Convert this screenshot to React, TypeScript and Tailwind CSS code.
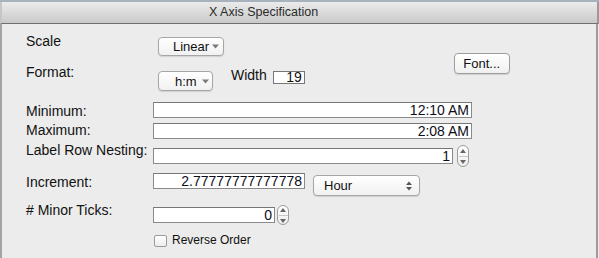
const font = { fontFamily: '"Liberation Sans", Arial, sans-serif' };

function DownTri() {
  return (
    <svg width="7" height="5" viewBox="0 0 7 5" className="shrink-0">
      <path d="M0 0.5 L7 0.5 L3.5 4.5 Z" fill="#7a7a7a" />
    </svg>
  );
}

function UpDown() {
  return (
    <svg width="6" height="10" viewBox="0 0 6 10" className="shrink-0">
      <path d="M0 4 L6 4 L3 0.5 Z" fill="#555" />
      <path d="M0 6 L6 6 L3 9.5 Z" fill="#555" />
    </svg>
  );
}

function Popup({ label, w, h, pl, gap }: { label: string; w: string; h: string; pl: string; gap: string }) {
  return (
    <div
      className={`${w} ${h} ${pl} ${gap} flex items-center rounded-[4px] border border-[#a6a6a6] bg-gradient-to-b from-white to-[#f1f1f1] shadow-[0_1px_1px_rgba(0,0,0,0.12)] text-[13px] leading-none text-[#111]`}
    >
      <span>{label}</span>
      <DownTri />
    </div>
  );
}

function Stepper({ h }: { h: string }) {
  return (
    <div className={`${h} w-[12px] flex flex-col items-center justify-center gap-[3px] rounded-[6px] border border-[#9c9c9c] bg-gradient-to-b from-white to-[#eeeeee]`}>
      <svg width="6" height="4" viewBox="0 0 6 4">
        <path d="M0 4 L6 4 L3 0 Z" fill="#666" />
      </svg>
      <div className="h-px w-[9px] bg-[#c8c8c8]" />
      <svg width="6" height="4" viewBox="0 0 6 4">
        <path d="M0 0 L6 0 L3 4 Z" fill="#666" />
      </svg>
    </div>
  );
}

function Field({ value, w }: { value: string; w: string }) {
  return (
    <div className={`${w} h-[16px] border border-[#8a8a8a] border-t-[#777] bg-white flex items-center justify-end pr-[2px] text-[14px] leading-none text-[#0d0d1a]`}>
      {value}
    </div>
  );
}

export default function App() {
  return (
    <div className="w-[599px] h-[258px] overflow-hidden bg-[#ececec] flex flex-col" style={font}>
      {/* Title bar */}
      <div className="h-[2px] bg-[#a8b2bc]" />
      <div className="h-[22px] flex items-center pl-[207px] bg-gradient-to-b from-[#ebebeb] to-[#c9c9c9] border-b border-[#6f6f6f] border-l-2 border-l-[#c6c6c6] border-r-2 border-r-[#9a9a9a]">
        <span className="text-[12.5px] leading-none text-[#2a2a2a]">X Axis Specification</span>
      </div>

      <div className="flex-1 border-l-2 border-[#a3a3a3] border-r-2 border-r-[#9c9c9c] mr-px pl-[24px] text-[14px] leading-[16px] text-[#111]">
        {/* Scale / Format / Font */}
        <div className="flex">
          <div className="flex flex-col">
            <div className="mt-[9px] flex items-start">
              <div className="w-[132px]">Scale</div>
              <div className="mt-[4px]">
                <Popup label="Linear" w="w-[66px]" h="h-[19px]" pl="pl-[14px]" gap="gap-[3px]" />
              </div>
            </div>
            <div className="mt-[8px] flex items-start">
              <div className="w-[132px]">Format:</div>
              <div className="mt-[7px]">
                <Popup label="h:m" w="w-[55px]" h="h-[20px]" pl="pl-[16px]" gap="gap-[5px]" />
              </div>
              <div className="ml-[18px] mt-[3px]">Width</div>
              <div className="ml-[6px] mt-[7px] w-[32px] h-[13px] border border-[#777] bg-white flex items-center justify-end pr-[2px] leading-[13px]">
                19
              </div>
            </div>
          </div>
          <div className="ml-[149px] mt-[29px] w-[56px] h-[21px] rounded-[4px] border border-[#9e9e9e] bg-gradient-to-b from-white to-[#f0f0f0] shadow-[0_1px_1px_rgba(0,0,0,0.12)] flex items-center justify-center text-[13px] leading-none">
            Font...
          </div>
        </div>

        {/* Minimum */}
        <div className="mt-[11px] flex items-start">
          <div className="w-[127px] mt-[1px]">Minimum:</div>
          <Field value="12:10 AM" w="w-[319px]" />
        </div>

        {/* Maximum */}
        <div className="mt-[4px] flex items-start">
          <div className="w-[127px] -mt-[1px]">Maximum:</div>
          <Field value="2:08 AM" w="w-[319px]" />
        </div>

        {/* Label Row Nesting */}
        <div className="mt-[6px] flex items-start">
          <div className="w-[127px] -mt-[3px] whitespace-nowrap">Label Row Nesting:</div>
          <div className="mt-[3px]">
            <Field value="1" w="w-[300px]" />
          </div>
          <div className="ml-[4px]">
            <Stepper h="h-[22px]" />
          </div>
        </div>

        {/* Increment */}
        <div className="mt-[6px] flex items-start">
          <div className="w-[127px] mt-[1px]">Increment:</div>
          <Field value="2.77777777777778" w="w-[152px]" />
          <div className="ml-[8px] mt-[2px] w-[107px] h-[21px] pl-[10px] pr-[7px] flex items-center justify-between rounded-[4px] border border-[#a6a6a6] bg-gradient-to-b from-white to-[#f1f1f1] shadow-[0_1px_1px_rgba(0,0,0,0.12)] text-[13px] leading-none">
            <span>Hour</span>
            <UpDown />
          </div>
        </div>

        {/* Minor Ticks */}
        <div className="mt-[6px] flex items-start">
          <div className="w-[127px]"># Minor Ticks:</div>
          <div className="mt-[5px]">
            <Field value="0" w="w-[122px]" />
          </div>
          <div className="ml-[2px] mt-[3px]">
            <Stepper h="h-[20px]" />
          </div>
        </div>

        {/* Reverse Order */}
        <div className="mt-[8px] flex items-start pl-[128px]">
          <div className="mt-[2px] w-[13px] h-[12px] rounded-[2px] border border-[#9a9a9a] bg-gradient-to-b from-white to-[#ededed]" />
          <div className="ml-[5px] text-[12px] leading-[14px]">Reverse Order</div>
        </div>
      </div>
    </div>
  );
}
